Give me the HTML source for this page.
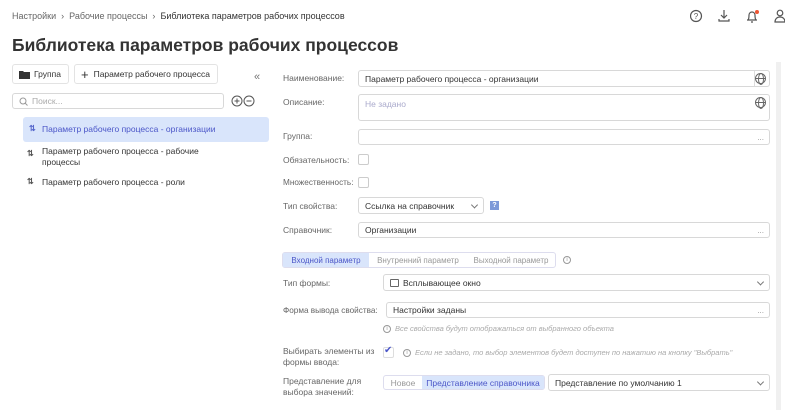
<!DOCTYPE html>
<html><head><meta charset="utf-8"><style>
*{box-sizing:border-box;margin:0;padding:0}
body{width:800px;height:410px;overflow:hidden;background:#fff;font-family:"Liberation Sans",sans-serif;color:#333;position:relative;font-size:8.5px}
.a{position:absolute;white-space:nowrap}
.bc{top:11px;left:12px;font-size:9px;color:#666}
.bc b{font-weight:normal;color:#333}
.title{top:35px;left:12px;font-size:17.5px;font-weight:bold;color:#333}
.btn{border:1px solid #e3e3e3;border-radius:3px;height:20px;font-size:8.5px;display:flex;align-items:center;padding:0 6px;color:#333}
.inp{border:1px solid #d8d8d8;border-radius:3px;background:#fff;font-size:8.5px;display:flex;align-items:center;padding:0 6px;color:#333}
.lbl{color:#666;font-size:8.5px}
.dots{position:absolute;right:5px;bottom:2px;color:#999;font-size:8px}
.cb{border:1px solid #ccc;border-radius:2px;width:11px;height:11px}
.chev{position:absolute;right:6px;top:50%;width:5px;height:5px;border-right:1px solid #777;border-bottom:1px solid #777;transform:translateY(-70%) rotate(45deg)}
.glob{position:absolute;right:3px;top:2px;width:11px;height:11px;border:1.2px solid #666;border-radius:50%}
.glob:before{content:"";position:absolute;left:2px;top:-1px;width:4px;height:10px;border:1px solid #666;border-radius:50%}
.glob:after{content:"";position:absolute;left:-1px;top:4px;width:10px;height:0;border-top:1px solid #666}
.hint{color:#aaa;font-style:italic;font-size:7.5px}
.ic{display:inline-block;width:8px;height:8px;border:1px solid #999;border-radius:50%;font-size:6px;text-align:center;line-height:7px;font-style:normal;color:#999;vertical-align:middle;margin-right:4px}
</style></head><body>
<div class="a bc">Настройки &nbsp;›&nbsp; Рабочие процессы &nbsp;›&nbsp; <b>Библиотека параметров рабочих процессов</b></div>
<svg class="a" style="left:690px;top:9px" width="95" height="14" viewBox="0 0 95 14" fill="none" stroke="#555" stroke-width="1.2">
<circle cx="6" cy="7" r="5.5"/><text x="6" y="10" font-size="8" text-anchor="middle" fill="#555" stroke="none" font-family="Liberation Sans">?</text>
<path d="M34 1v8M31 6l3 3 3-3M29 10v2h10v-2"/>
<path d="M57 11h10M58 11c1-1 1-3 1-5a3 3 0 0 1 6 0c0 2 0 4 1 5M61 13h2"/><circle cx="67" cy="3" r="2" fill="#e53" stroke="none"/>
<circle cx="90" cy="4" r="2.8"/><path d="M85 13c0-3 2-5 5-5s5 2 5 5z"/>
</svg>
<div class="a title">Библиотека параметров рабочих процессов</div>

<div class="a btn" style="left:12px;top:64px;width:57px"><svg width="11" height="9" style="margin-right:4px"><path d="M0 1h4l1 1h6v7H0z" fill="#333"/></svg>Группа</div>
<div class="a btn" style="left:74px;top:64px;width:144px"><span style="font-size:13px;margin-right:5px">+</span>Параметр рабочего процесса</div>
<div class="a" style="left:254px;top:71px;font-size:11px;color:#777">«</div>
<div class="a inp" style="left:12px;top:93px;width:212px;height:16px;color:#aaa"><svg width="9" height="9" style="margin-right:4px" fill="none" stroke="#999"><circle cx="4" cy="4" r="3"/><path d="M6 6l2.5 2.5"/></svg>Поиск...</div>
<svg class="a" style="left:231px;top:95px" width="24" height="12" fill="none" stroke="#555"><circle cx="6" cy="6" r="5"/><path d="M3.5 6h5M6 3.5v5"/><circle cx="18" cy="6" r="5"/><path d="M15.5 6h5"/></svg>

<div class="a" style="left:23px;top:117px;width:246px;height:25px;background:#d9e5fb;border-radius:3px"></div>
<div class="a" style="left:29px;top:124px;font-size:8px;font-weight:bold;color:#5566cc">⇅</div>
<div class="a" style="left:42px;top:124px;color:#4b56c8">Параметр рабочего процесса - организации</div>
<div class="a" style="left:27px;top:149px;font-size:8px;font-weight:bold;color:#555">⇅</div>
<div class="a" style="left:42px;top:146px;line-height:11px">Параметр рабочего процесса - рабочие<br>процессы</div>
<div class="a" style="left:27px;top:177px;font-size:8px;font-weight:bold;color:#555">⇅</div>
<div class="a" style="left:42px;top:177px">Параметр рабочего процесса - роли</div>

<div class="a lbl" style="left:283px;top:73px">Наименование:</div>
<div class="a inp" style="left:358px;top:70px;width:412px;height:17px">Параметр рабочего процесса - организации<span style="position:absolute;right:14px;top:0;height:100%;border-left:1px solid #ddd"></span><span class="glob"></span></div>
<div class="a lbl" style="left:283px;top:97px">Описание:</div>
<div class="a inp" style="left:358px;top:94px;width:412px;height:27px;align-items:flex-start;padding-top:4px;color:#aac">Не задано<span class="glob"></span></div>
<div class="a lbl" style="left:283px;top:131px">Группа:</div>
<div class="a inp" style="left:358px;top:129px;width:412px;height:16px"><span class="dots">...</span></div>
<div class="a lbl" style="left:283px;top:155px">Обязательность:</div>
<div class="a cb" style="left:358px;top:154px"></div>
<div class="a lbl" style="left:283px;top:178px;font-size:8.2px">Множественность:</div>
<div class="a cb" style="left:358px;top:177px"></div>
<div class="a lbl" style="left:283px;top:201px">Тип свойства:</div>
<div class="a inp" style="left:358px;top:197px;width:126px;height:17px">Ссылка на справочник<span class="chev"></span></div>
<div class="a" style="left:490px;top:201px;width:9px;height:9px;background:#7d99d8;color:#fff;font-size:7px;text-align:center;line-height:9px;font-weight:bold">?</div>
<div class="a lbl" style="left:283px;top:225px">Справочник:</div>
<div class="a inp" style="left:358px;top:222px;width:412px;height:16px">Организации<span class="dots">...</span></div>

<div class="a" style="left:282px;top:252px;width:274px;height:16px;border:1px solid #dde;border-radius:3px;display:flex;font-size:8px;color:#999;align-items:center">
<div style="background:#d9e5fb;color:#4b56c8;height:100%;width:86px;display:flex;align-items:center;justify-content:center">Входной параметр</div>
<div style="width:98px;text-align:center">Внутренний параметр</div><div style="width:88px;text-align:center">Выходной параметр</div></div>
<div class="a" style="left:563px;top:254px"><span class="ic">i</span></div>
<div class="a lbl" style="left:283px;top:278px">Тип формы:</div>
<div class="a inp" style="left:383px;top:274px;width:387px;height:17px"><span style="display:inline-block;width:9px;height:8px;border:1px solid #666;border-radius:1px;margin-right:4px"></span>Всплывающее окно<span class="chev"></span></div>
<div class="a lbl" style="left:283px;top:306px;font-size:8.2px">Форма вывода свойства:</div>
<div class="a inp" style="left:386px;top:302px;width:384px;height:16px">Настройки заданы<span class="dots">...</span></div>
<div class="a hint" style="left:383px;top:324px"><span class="ic">i</span>Все свойства будут отображаться от выбранного объекта</div>
<div class="a lbl" style="left:283px;top:346px;line-height:11px">Выбирать элементы из<br>формы ввода:</div>
<div class="a cb" style="left:383px;top:347px;border-color:#ddd"></div>
<div class="a" style="left:384px;top:345px;color:#4b56c8;font-size:10px">✔</div>
<div class="a hint" style="left:403px;top:348px"><span class="ic">i</span>Если не задано, то выбор элементов будет доступен по нажатию на кнопку "Выбрать"</div>
<div class="a lbl" style="left:283px;top:376px;line-height:11px">Представление для<br>выбора значений:</div>
<div class="a" style="left:383px;top:375px;width:162px;height:15px;border:1px solid #dde;border-radius:3px;display:flex;align-items:center;font-size:8.5px">
<div style="width:38px;text-align:center;color:#999">Новое</div><div style="flex:1;height:100%;background:#d9e5fb;color:#4b56c8;display:flex;align-items:center;justify-content:center">Представление справочника</div></div>
<div class="a inp" style="left:548px;top:374px;width:222px;height:17px">Представление по умолчанию 1<span class="chev"></span></div>
<div class="a" style="left:776px;top:62px;width:5px;height:348px;background:#f0f0f0"></div>
</body></html>
